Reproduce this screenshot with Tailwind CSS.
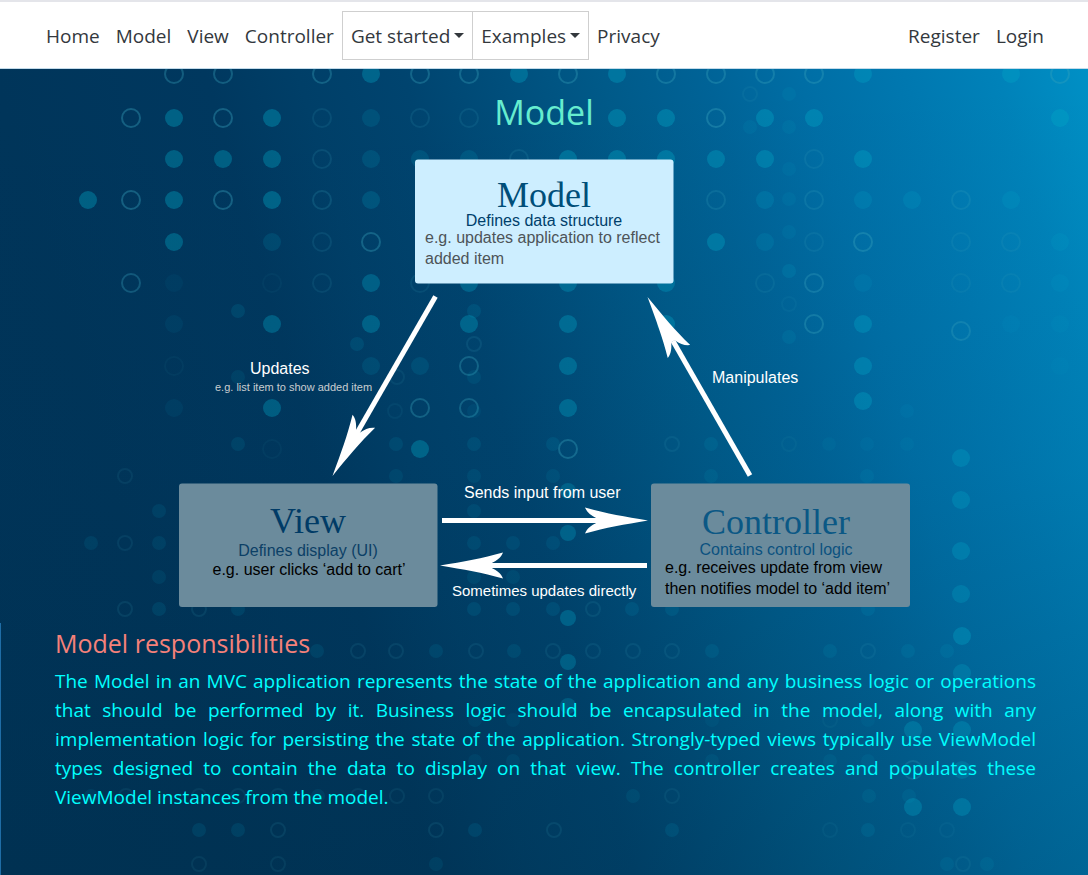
<!DOCTYPE html>
<html lang="en">
<head>
<meta charset="utf-8">
<meta name="viewport" content="width=device-width, initial-scale=1">
<title>Model</title>
<script src="https://cdn.jsdelivr.net/npm/@tailwindcss/browser@4"></script>
</head>
<body class="min-h-screen flex flex-col bg-[#00355a] font-['Open_Sans','Noto_Sans',sans-serif] text-[19px]">
<header class="border-t-2 border-t-[#e4e5ea] border-b border-b-[#c3dbea] bg-white text-[#33383d]">
  <nav aria-label="Main" class="flex items-center justify-between pt-[9px] pb-2 pl-[38px] pr-9">
    <ul class="flex items-center leading-7">
      <li><a href="#" class="block px-2">Home</a></li>
      <li><a href="#" class="block px-2">Model</a></li>
      <li><a href="#" class="block px-2">View</a></li>
      <li><a href="#" class="block px-2">Controller</a></li>
      <li><button type="button" class="flex h-[49px] items-center gap-1 border border-[#cfcfcf] px-2">Get started
        <svg class="h-[5px] w-[10px]" viewBox="0 0 10 5" fill="currentColor" aria-hidden="true"><path d="M0 0h10L5 5z"/></svg></button></li>
      <li><button type="button" class="-ml-px flex h-[49px] items-center gap-1 border border-[#cfcfcf] px-2">Examples
        <svg class="h-[5px] w-[10px]" viewBox="0 0 10 5" fill="currentColor" aria-hidden="true"><path d="M0 0h10L5 5z"/></svg></button></li>
      <li><a href="#" class="block px-2">Privacy</a></li>
    </ul>
    <ul class="flex items-center leading-7">
      <li><a href="#" class="block px-2">Register</a></li>
      <li><a href="#" class="block px-2">Login</a></li>
    </ul>
  </nav>
</header>

<main class="relative isolate flex flex-1 flex-col overflow-hidden bg-[linear-gradient(to_bottom,transparent_0%,rgba(0,35,50,0.04)_50%,rgba(0,35,50,0.18)_100%),linear-gradient(74deg,#003459_0%,#00355a_17%,#00385f_33%,#003f68_40%,#00446f_48%,#004e7b_55%,#005a89_63%,#006397_71%,#006ea5_78%,#0078b0_86%,#0082b9_93%,#0090c5_100%)]">
  <svg id="dots" class="absolute inset-0 -z-10 h-full w-full" viewBox="0 69 1088 806" preserveAspectRatio="xMinYMin slice" aria-hidden="true"></svg>

  <h1 class="pt-[22px] text-center text-[34px] leading-[42px] text-[#66edcf]">Model</h1>

  <svg class="mx-auto mt-[26px] block w-[732px] max-w-full" viewBox="178 159 732 449" role="img" aria-label="Model, view and controller diagram" font-family="'Liberation Sans', Arial, sans-serif" font-size="16">
    <defs>
      <path id="head" d="M0 0C-24 -4 -42 -7 -63 -13C-61 -8 -57 -5 -51 -2V2C-57 5 -61 8 -63 13C-42 7 -24 4 0 0Z"/>
    </defs>
    <rect x="415" y="159.500" width="258.500" height="124" rx="3" fill="#cdeeff"/>
    <rect x="179" y="483.500" width="258.500" height="123.500" rx="3" fill="#6b8b9c"/>
    <rect x="651" y="483.500" width="259" height="123.500" rx="3" fill="#6b8b9c"/>

    <g stroke="#fff" stroke-width="5" fill="none">
      <path d="M435.500 296.500L357 433"/>
      <path d="M750 475.500L673 341"/>
      <path d="M442 520.500H600"/>
      <path d="M647 565.500H490"/>
    </g>
    <g fill="#fff">
      <use href="#head" transform="translate(332.500 476) rotate(119.800)"/>
      <use href="#head" transform="translate(647.500 297) rotate(-120)"/>
      <use href="#head" transform="translate(648 520.500)"/>
      <use href="#head" transform="translate(440 565.500) rotate(180)"/>
    </g>

    <g font-family="'Liberation Serif', 'Times New Roman', serif" font-size="36" text-anchor="middle">
      <text x="544" y="207" fill="#004e79">Model</text>
      <text x="308" y="533" fill="#003b66">View</text>
      <text x="776" y="534" fill="#0b5885">Controller</text>
    </g>
    <g text-anchor="middle">
      <text x="544" y="226" fill="#003f6b">Defines data structure</text>
      <text x="308" y="556" fill="#0c4066">Defines display (UI)</text>
      <text x="776" y="555" fill="#0b5280">Contains control logic</text>
      <text x="309" y="575" fill="#000">e.g. user clicks ‘add to cart’</text>
    </g>
    <text x="425" y="243" fill="#4d5458">e.g. updates application to reflect</text>
    <text x="425" y="264" fill="#4d5458">added item</text>
    <text x="665" y="573" fill="#000">e.g. receives update from view</text>
    <text x="665" y="594" fill="#000">then notifies model to ‘add item’</text>
    <g fill="#fff">
      <text x="250" y="374">Updates</text>
      <text x="215" y="391" font-size="11" fill="#c9cdd0">e.g. list item to show added item</text>
      <text x="712" y="383">Manipulates</text>
      <text x="464" y="498">Sends input from user</text>
      <text x="452" y="596" font-size="15">Sometimes updates directly</text>
    </g>
  </svg>

  <section class="mt-[15px] flex-1 border-l border-[#1f6da6] pb-14 pl-[54px] pr-[52px]">
    <h2 class="text-[25px] leading-10 text-[#f5817a]">Model responsibilities</h2>
    <p class="mt-1 text-justify leading-[29px] text-[#00ffff]">The Model in an MVC application represents the state of the application and any business logic or operations that should be performed by it. Business logic should be encapsulated in the model, along with any implementation logic for persisting the state of the application. Strongly-typed views typically use ViewModel types designed to contain the data to display on that view. The controller creates and populates these ViewModel instances from the model.</p>
  </section>
</main>

<script>
// Dot pattern: [y, radius, opacity, filled x positions, ring x positions]
const rows = [
  [74, 9, 0.34, [371,519,617,863,1011], [174,223,322,420,469,568,666,716,765,814,1060]],
  [118, 9, 0.38, [174,272,617,666,765,814,1060], [131,223,716]],
  [118, 9, 0.15, [371], [322,420,469]],
  [159, 9, 0.36, [174,223,272,568,617,666,716,765,863], []],
  [159, 9, 0.16, [371,420,469], [322,519,814]],
  [200, 9, 0.38, [88,174,272], [131,223]],
  [200, 9, 0.2, [371,765,863,912,1011], [322,716,814,961]],
  [242, 9, 0.36, [174,716], [371,863]],
  [242, 9, 0.15, [272,765,1060], [322,814,961,1011]],
  [283, 9, 0.32, [371,469,568,666], [131,814]],
  [283, 9, 0.13, [863,1060], [322,420,765,961,1011]],
  [283, 9, 0.06, [174], [272]],
  [324, 9, 0.34, [272,371,469,568,666,863], [814]],
  [324, 9, 0.08, [174,1011,1060], []],
  [331, 9, 0.3, [], [961]],
  [366, 9, 0.34, [568,863], [469]],
  [366, 9, 0.14, [371,420], []],
  [366, 9, 0.06, [1060], [174]],
  [401, 9, 0.34, [863], []],
  [408, 9, 0.34, [272,568], [420,469]],
  [408, 9, 0.08, [174], []],
  [449, 9, 0.36, [420], [568]],
  [449, 9, 0.06, [], [272]],
  [458, 9, 0.3, [961], []],
  [500, 9, 0.3, [961], []],
  [551, 9, 0.3, [961], []],
  [594, 9, 0.28, [961], []],
  [491, 8, 0.28, [568], []],
  [533, 8, 0.3, [568], []],
  [618, 8, 0.32, [568], []],
  [636, 9, 0.34, [962], []],
  [662, 8, 0.3, [568], []],
  [673, 9, 0.28, [962], []],
  [706, 8, 0.26, [568], []],
  [730, 9, 0.3, [913,962], []],
  [770, 9, 0.24, [962], [913]],
  [807, 9, 0.32, [913,962], []],
  [94, 7, 0.1, [789], [750]],
  [127, 7, 0.1, [750,789], []],
  [169, 7, 0.09, [789], []],
  [199, 7, 0.1, [789], []],
  [232, 7, 0.1, [789], []],
  [271, 7, 0.16, [789], []],
  [304, 7, 0.08, [], [789]],
  [311, 7, 0.14, [238,474], []],
  [344, 7, 0.14, [357], [474]],
  [337, 7, 0.12, [789], []],
  [377, 7, 0.1, [238,474], [397]],
  [411, 7, 0.08, [474,907], [395]],
  [444, 7, 0.12, [238,396,474,553,711], [672]],
  [444, 7, 0.07, [829,867,907], [789]],
  [476, 7, 0.1, [396,474,553,711,867], [125]],
  [511, 7, 0.11, [159,474], []],
  [543, 7, 0.11, [91,159,474,513,553], [125]],
  [577, 7, 0.1, [159,474,513], []],
  [609, 7, 0.13, [159,238,474,513,553,632,672,868], [125,199,593]],
  [651, 7, 0.12, [317,436,514,712,830,908,947], [358,396,476,553,593,633,672,868]],
  [720, 7, 0.07, [475,513,712,868], [830]],
  [761, 7, 0.09, [475,513,712,830,868], []],
  [796, 7, 0.1, [91,318,633,869,909], [126,199,238,278,358,397,436,672]],
  [830, 7, 0.13, [199,238,475,672,868], [278,436,554]],
  [830, 7, 0.08, [], [830,908,947]],
  [864, 7, 0.1, [436,947,987], [199,278,963]],
];
const svg = document.getElementById('dots');
function dot(x, y, r, opacity, ring) {
  const c = document.createElementNS('http://www.w3.org/2000/svg', 'circle');
  c.setAttribute('cx', x);
  c.setAttribute('cy', y);
  c.setAttribute('r', r);
  c.setAttribute('fill', ring ? 'none' : '#00a6c6');
  if (ring) { c.setAttribute('stroke', '#38a3bd'); c.setAttribute('stroke-width', 2); }
  c.setAttribute('opacity', opacity);
  svg.appendChild(c);
}
for (const [y, r, o, filled, rings] of rows) {
  filled.forEach(x => dot(x, y, r, o, false));
  rings.forEach(x => dot(x, y, r, o, true));
}
</script>
</body>
</html>
